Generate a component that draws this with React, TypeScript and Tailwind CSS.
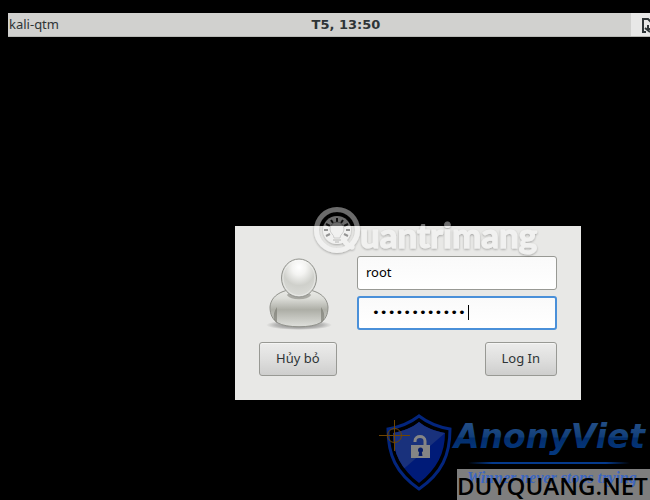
import React from "react";

function Avatar() {
  return (
    <svg width="66" height="76" viewBox="0 0 66 76" aria-label="User avatar" role="img">
      <defs>
        <radialGradient id="head" cx="50%" cy="22%" r="80%">
          <stop offset="0" stopColor="#ffffff" />
          <stop offset=".25" stopColor="#f4f4f2" />
          <stop offset=".6" stopColor="#cfd0cb" />
          <stop offset="1" stopColor="#dcddd9" />
        </radialGradient>
        <linearGradient id="body" x1="0" y1="0" x2="0" y2="1">
          <stop offset="0" stopColor="#ecece9" />
          <stop offset=".25" stopColor="#dcddd8" />
          <stop offset=".55" stopColor="#adaea6" />
          <stop offset="1" stopColor="#dfe0dc" />
        </linearGradient>
        <radialGradient id="ground">
          <stop offset="0" stopColor="#555" stopOpacity=".8" />
          <stop offset=".7" stopColor="#777" stopOpacity=".45" />
          <stop offset="1" stopColor="#777" stopOpacity="0" />
        </radialGradient>
      </defs>
      <ellipse cx="33" cy="69" rx="33" ry="5" fill="url(#ground)" />
      <path d="M4 51C5 39 17 33 33 33s28 6 29 18c0 8-3 13-8 16-8 5-34 5-42 0-5-3-8-8-8-16Z" fill="url(#body)" stroke="#8f908a" />
      <path d="M11 51c-3 4-4 9-3 13l3 3V51ZM55 51c3 4 4 9 3 13l-3 3V51Z" fill="#74756d" fillOpacity=".6" />
      <path d="M22 38c4 5 18 5 22 0" fill="none" stroke="#85867e" strokeOpacity=".6" strokeWidth="3" />
      <ellipse cx="33" cy="22" rx="17.5" ry="19" fill="url(#head)" stroke="#92938e" />
      <ellipse cx="33" cy="22" rx="16" ry="17.5" fill="none" stroke="#fff" strokeOpacity=".4" />
    </svg>
  );
}

function QuantrimangMark() {
  return (
    <svg className="pointer-events-none absolute left-[310px] top-[202px]" width="230" height="60" viewBox="0 0 230 60" aria-hidden="true">
      <defs>
        <filter id="lift" x="-10%" y="-10%" width="120%" height="130%">
          <feDropShadow dx="0" dy="1" stdDeviation="1" floodColor="#000" floodOpacity=".7" />
        </filter>
      </defs>
      <g opacity=".42" filter="url(#lift)">
        <circle cx="27" cy="28" r="20.5" fill="none" stroke="#fff" strokeWidth="5" />
        <circle cx="27" cy="28" r="14" fill="#fff" />
        <path d="M34 38c2 4 4 6 8 7" fill="none" stroke="#fff" strokeWidth="5" strokeLinecap="round" />
        <g stroke="#222" strokeWidth="2">
          <path d="M27 16v4M21 18l2 3M33 18l-2 3M16 22l4 2M38 22l-4 2M14 28h4M40 28h-4M16 34l4-2M38 34l-4-2" />
        </g>
        <path d="M24 36c0-4-4-4-4-9a7 7 0 0 1 14 0c0 5-4 5-4 9Z" fill="#fff" stroke="#888" strokeWidth=".7" />
        <path d="M23 38h8M25 40h4" stroke="#777" />
        <text x="50" y="46" fontFamily="Lato, sans-serif" fontWeight="700" fontSize="35" fill="#fff" stroke="#fff" strokeWidth="1" strokeLinejoin="round">uantrimang</text>
      </g>
    </svg>
  );
}

function AnonyVietMark() {
  return (
    <svg className="pointer-events-none absolute bottom-0 right-0" width="280" height="100" viewBox="0 0 280 100" aria-hidden="true">
      <defs>
        <linearGradient id="blueText" x1="0" y1="0" x2="0" y2="1">
          <stop offset=".2" stopColor="#214c84" />
          <stop offset=".5" stopColor="#123f79" />
          <stop offset=".55" stopColor="#032e6c" />
          <stop offset="1" stopColor="#043a82" />
        </linearGradient>
        <linearGradient id="rule">
          <stop offset="0" stopColor="#043a8d" stopOpacity="0" />
          <stop offset=".15" stopColor="#043a8d" />
          <stop offset=".85" stopColor="#043a8d" />
          <stop offset="1" stopColor="#043a8d" stopOpacity="0" />
        </linearGradient>
        <clipPath id="shieldClip">
          <path d="M49 22C42 28 33 31 23 33c0 20 8 36 26 50 18-14 26-30 26-50-10-2-19-5-26-11Z" />
        </clipPath>
      </defs>
      <path d="M49 16C40 23 30 27 18 29c0 26 8 44 31 60 23-16 31-34 31-60-12-2-22-6-31-13Z" fill="#000" stroke="#03257d" strokeWidth="3" />
      <g clipPath="url(#shieldClip)">
        <path d="M20 20h60v65H20Z" fill="#001b78" />
        <path d="M20 20h55v13L29 73 20 60Z" fill="#19317c" />
      </g>
      <path d="M45 42v-1c0-6 10-6 10 0v5" fill="none" stroke="#858585" strokeWidth="3" />
      <path d="M41 45h19v13H41Z" fill="#858585" />
      <circle cx="50.5" cy="50" r="2.5" fill="#071d69" />
      <path d="M49.5 50h2l1 6h-4Z" fill="#071d69" />
      <g fill="none" stroke="#704500" strokeWidth="1">
        <circle cx="24.5" cy="35.5" r="7" />
        <path d="M9 35.5h31M24.5 20v31" />
      </g>
      <text x="84" y="48" fontFamily="'DejaVu Sans', sans-serif" fontStyle="italic" fontWeight="700" fontSize="33" fill="url(#blueText)">AnonyViet</text>
      <rect x="98" y="62" width="162" height="2" fill="url(#rule)" />
      <path d="M87 69h193v31H87Z" fill="#7e7e7e" />
      <text x="97" y="83" fontFamily="'Liberation Serif', serif" fontStyle="italic" fontWeight="700" fontSize="16" fill="#3c66c0">Winner never stops trying</text>
      <text x="87" y="95" fontFamily="'Open Sans', sans-serif" fontWeight="550" fontSize="24" fill="#000">DUYQUANG.NET</text>
    </svg>
  );
}

const button =
  "h-[34px] rounded-[3px] border border-[#989994] bg-gradient-to-b from-[#ececeb] via-[#dfdfde] to-[#cececd] px-4 text-[13px] text-[#2e3436] shadow-[inset_0_1px_0_#f5f5f4]";

export default function App() {
  return (
    <div className="relative min-h-screen overflow-hidden bg-black pt-[13px] font-['Noto_Sans','DejaVu_Sans',sans-serif] text-[13px] text-[#2e3436]">
      <header className="-mr-[34px] ml-2 grid h-6 grid-cols-[1fr_auto_1fr] items-center border-b border-[#b7b8b4] bg-[#d1d1cf]">
        <span className="pl-px">kali-qtm</span>
        <time className="font-['DejaVu_Sans',sans-serif] text-[13px] font-bold">T5, 13:50</time>
        <button aria-label="Accessibility" className="flex h-full w-[53px] items-center justify-self-end bg-[#e8e8e7] pl-2.5">
          <svg width="16" height="16" viewBox="0 0 16 16" fill="none" stroke="#2e3436" strokeWidth="2">
            <path d="M5 15H2V2h5l4 4v8" />
            <path d="M4 11l5 4M7 8v4h3" />
          </svg>
        </button>
      </header>
      <main className="mt-[189px] flex justify-center pl-[166px]">
        <form className="w-[346px] bg-[#e8e8e6] px-6 pb-6 pt-[30px]" onSubmit={(e) => e.preventDefault()}>
          <div className="flex justify-between">
            <div className="pl-[7px]">
              <Avatar />
            </div>
            <div className="flex w-[200px] flex-col gap-1.5">
              <input aria-label="Username" defaultValue="root" className="h-[34px] w-full rounded-[3px] border border-[#989994] bg-gradient-to-b from-[#fafafa] to-white px-2 pb-0.5 text-[13px] text-black outline-none" />
              <div className="relative">
                <input aria-label="Password" type="password" defaultValue="kaliqtm12345" className="block h-[34px] w-full rounded-[3px] border-2 border-[#4a90d9] bg-gradient-to-b from-[#fafafa] to-white pb-0.5 pl-[13px] font-['DejaVu_Sans_Mono',monospace] text-[13px] text-black outline-none" />
                <span className="absolute left-[111px] top-[9px] h-[15px] w-px bg-black" />
              </div>
            </div>
          </div>
          <div className="mt-[10px] flex justify-between">
            <button type="button" className={button}>Hủy bỏ</button>
            <button type="submit" className={button}>Log In</button>
          </div>
        </form>
      </main>
      <QuantrimangMark />
      <AnonyVietMark />
    </div>
  );
}
